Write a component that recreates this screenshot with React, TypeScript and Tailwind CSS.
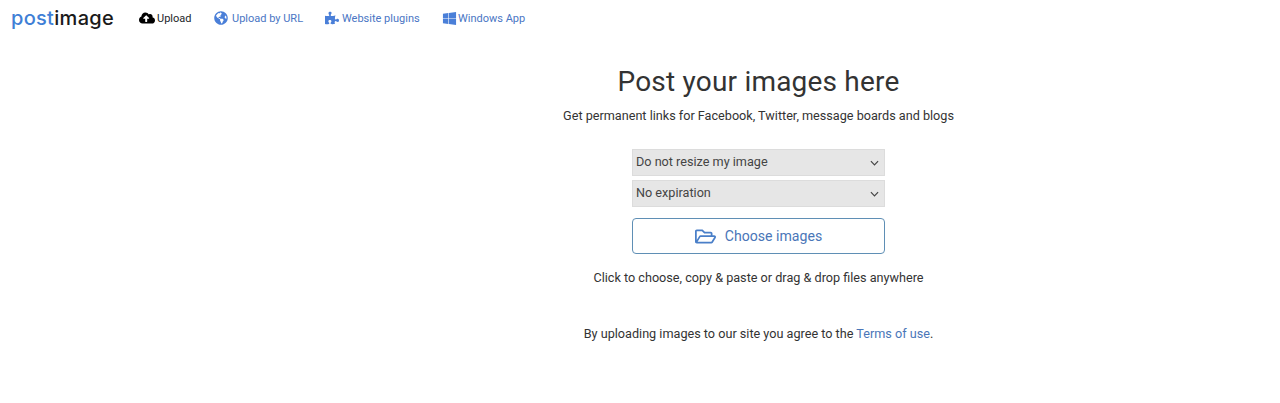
import { FaCloudUploadAlt, FaGlobeAmericas, FaPuzzlePiece, FaWindows, FaRegFolderOpen } from "react-icons/fa";
import type { ReactNode } from "react";

function NavLink({ icon, text, active, className }: { icon: ReactNode; text: string; active?: boolean; className: string }) {
  return (
    <a href="#" className={`flex items-center ${active ? "text-[#212529]" : "text-[#4a76c4]"} ${className}`}>
      {icon}
      <span className="mt-[2px]">{text}</span>
    </a>
  );
}

function SelectBox({ text }: { text: string }) {
  return (
    <div className="flex h-[27px] items-center justify-between border border-[#dcdcdc] bg-[#e6e6e6] pl-[3px] pr-[5px] text-[#444]">
      <span>{text}</span>
      <svg width="9" height="6" viewBox="0 0 10 6" fill="none" stroke="#444" strokeWidth="1.3">
        <path d="M1 1l4 4 4-4" />
      </svg>
    </div>
  );
}

export default function App() {
  return (
    <div className="h-[403px] bg-white font-['Roboto',sans-serif] text-[#212529]">
      <nav className="flex h-9 items-center pl-[11px] text-[11px]">
        <a href="#" className="w-[128px] font-['Inter',sans-serif] text-[20px] font-medium leading-none tracking-[0.3px]">
          <span className="text-[#3f7fd6]">post</span>
          <span className="text-[#1a1a1a]">image</span>
        </a>
        <NavLink active text="Upload" className="w-[75px] gap-[2px]" icon={<FaCloudUploadAlt className="text-[16px] text-black" />} />
        <NavLink text="Upload by URL" className="w-[111px] gap-[4px]" icon={<FaGlobeAmericas className="text-[14px] text-[#4a7fd8]" />} />
        <NavLink text="Website plugins" className="w-[117px] gap-[3px]" icon={<FaPuzzlePiece className="text-[14px] text-[#4a7fd8]" />} />
        <NavLink text="Windows App" className="gap-[1px]" icon={<FaWindows className="text-[15px] text-[#4a7fd8]" />} />
      </nav>
      <main className="ml-[237px] flex flex-col items-center text-[12.65px] text-[#333]">
        <h1 className="mt-[27px] text-[28px] font-normal leading-[38px] tracking-[0.2px]">Post your images here</h1>
        <p className="mt-[5px] leading-[20px]">Get permanent links for Facebook, Twitter, message boards and blogs</p>
        <div className="mt-[23px] flex w-[253px] flex-col gap-1">
          <SelectBox text="Do not resize my image" />
          <SelectBox text="No expiration" />
        </div>
        <button className="mt-[11px] flex h-[36px] w-[253px] items-center justify-center gap-[9px] rounded border border-[#5f8fb5] bg-white pt-[1px] text-[14.1px] text-[#4a76b8]">
          <FaRegFolderOpen className="text-[21px] text-[#4a7fc8]" />
          Choose images
        </button>
        <p className="mt-[14px] leading-[20px]">Click to choose, copy &amp; paste or drag &amp; drop files anywhere</p>
        <p className="mt-[36px] leading-[20px]">
          By uploading images to our site you agree to the <a href="#" className="text-[#4a76b8]">Terms of use</a>.
        </p>
      </main>
    </div>
  );
}
